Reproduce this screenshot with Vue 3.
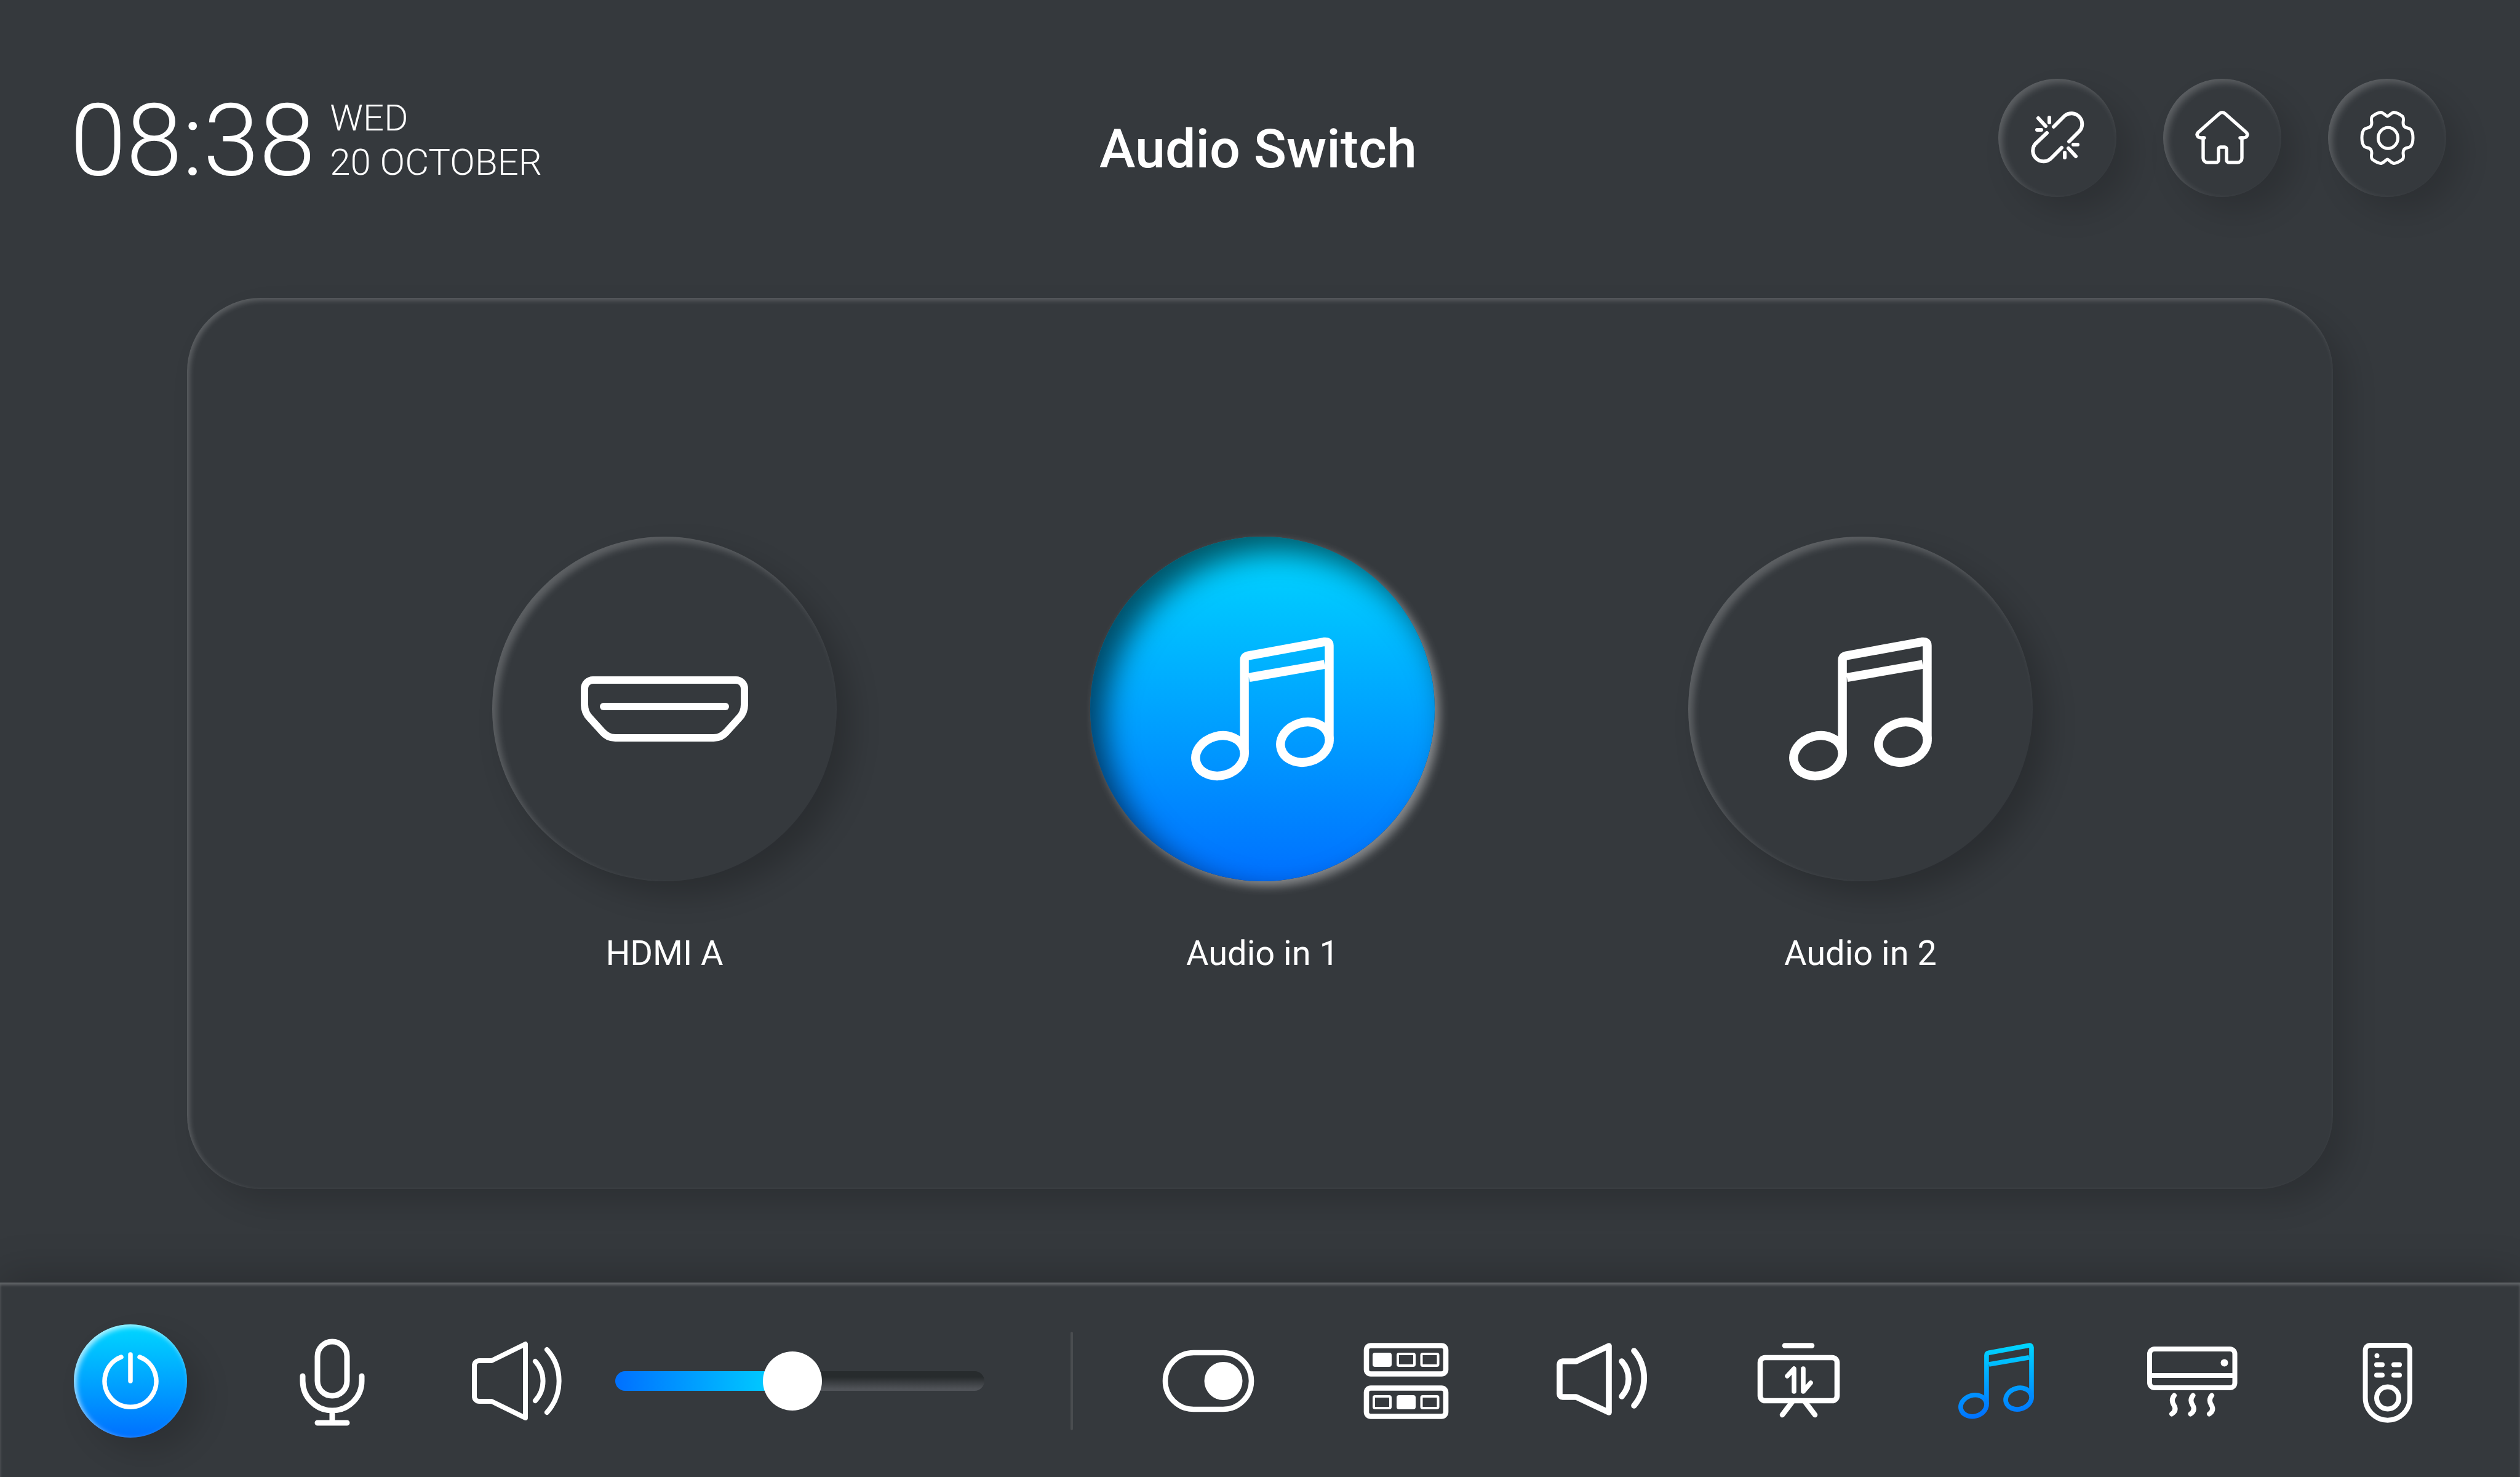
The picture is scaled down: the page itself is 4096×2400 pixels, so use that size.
<script setup>
import { ref } from 'vue'

const sources = [
  { id: 'hdmi-a', label: 'HDMI A', icon: 'hdmi' },
  { id: 'audio-1', label: 'Audio in 1', icon: 'note' },
  { id: 'audio-2', label: 'Audio in 2', icon: 'note' },
]
const selected = ref('audio-1')

const sections = [
  { id: 'toggle', label: 'Switches' },
  { id: 'matrix', label: 'Matrix' },
  { id: 'volume', label: 'Volume' },
  { id: 'screen', label: 'Screen' },
  { id: 'note', label: 'Audio' },
  { id: 'climate', label: 'Climate' },
  { id: 'remote', label: 'Remote' },
]
const section = ref('note')

const level = ref(47.6)
</script>

<template>
  <div class="page">
    <svg class="sprite" aria-hidden="true">
      <defs>
        <linearGradient id="accent" gradientUnits="userSpaceOnUse" x1="0" y1="0" x2="0" y2="234">
          <stop offset="0" stop-color="#00d8ff" />
          <stop offset="1" stop-color="#0070ff" />
        </linearGradient>
      </defs>
      <symbol id="unlink" viewBox="0 0 96 96" stroke-width="6">
        <path d="M42 30L60 12A17.4 17.4 0 0 1 84 37L67 54M31 40L12 58A17.4 17.4 0 0 0 37 82L55 64" />
        <path d="M17 16l12 13M35 15v8M15 35h7M66 65l12 13M60 72v8M74 59h7" />
      </symbol>
      <symbol id="home" viewBox="0 0 96 96" stroke-width="5.4">
        <path d="M19 48h-5c-6 0-9-5-5-9L43 9c3-3 7-3 10 0l34 30c4 4 1 9-5 9h-5" />
        <path d="M17 48v33a7 7 0 0 0 7 7h14a4 4 0 0 0 4-4V66a3 3 0 0 1 3-3h7a3 3 0 0 1 3 3v18a4 4 0 0 0 4 4h14a7 7 0 0 0 7-7V48" />
      </symbol>
      <symbol id="gear" viewBox="0 0 96 96" stroke-width="5">
        <path d="M48.500 13C45 12 42 7 38 6.500C33 7 28 10 24 13C20 17 25 23 22 28C20 33 14 31 11 34C7 38 7 44 7 48C7 52 7 58 11 62C14 65 20 63 22 68C25 73 20 79 24 83C28 86 33 89 38 89.500C42 89 45 84 48.500 83C52 84 55 89 59 89.500C64 89 69 86 73 83C77 79 72 73 75 68C77 63 83 65 86 62C90 58 90 52 90 48C90 44 90 38 86 34C83 31 77 33 75 28C72 23 77 17 73 13C69 10 64 7 59 6.500C55 7 52 12 48.500 13Z" />
        <ellipse cx="49.500" cy="48.300" rx="16" ry="17" />
      </symbol>
      <symbol id="hdmi" viewBox="-20 -84 312 274" stroke-width="12">
        <path d="M20 6h232a14 14 0 0 1 14 14v26c0 9-3 16-9 22l-20 22c-6 7-13 10-21 10H56c-8 0-15-3-21-10L15 68c-6-6-9-13-9-22V20a14 14 0 0 1 14-14z" />
        <path d="M37 49h198" />
      </symbol>
      <symbol id="note" viewBox="0 0 232 234" stroke-width="14.400">
        <path d="M86.600 188V38Q86.600 32 93 30.500L216 8Q224.500 7 224.500 14V166M94 66L217 44.700" stroke-linecap="butt" />
        <ellipse cx="47" cy="193" rx="40.200" ry="32.200" transform="rotate(-16 47 193)" />
        <ellipse cx="185" cy="171" rx="40.200" ry="32.200" transform="rotate(-16 185 171)" />
      </symbol>
      <symbol id="power" viewBox="0 0 96 96" stroke-width="7.500">
        <path d="M33 9A42 42 0 1 0 63 9M48 5v43" />
      </symbol>
      <symbol id="mic" viewBox="0 0 160 160" stroke-width="9">
        <rect x="56" y="16" width="48" height="88" rx="24" />
        <path d="M32 72v8a48 48 0 0 0 96 0v-8M80 128v20M56 148h48" />
      </symbol>
      <symbol id="speaker" viewBox="0 0 160 160" stroke-width="8">
        <path d="M94 20v120L39 113H19a8 8 0 0 1-8-8V55a8 8 0 0 1 8-8h20z" />
        <path d="M110 48a47 47 0 0 1 0 64M129 29a76 76 0 0 1 0 102" />
      </symbol>
      <symbol id="toggle" viewBox="0 0 160 160" stroke-width="8.600">
        <rect x="10" y="34" width="140" height="92" rx="46" />
        <circle cx="104.500" cy="80" r="31" fill="currentColor" stroke="none" />
      </symbol>
      <symbol id="matrix" viewBox="0 0 160 160" stroke-width="8.600">
        <rect x="17" y="22.500" width="129" height="46" rx="7" />
        <rect x="17" y="91.500" width="129" height="46" rx="7" />
        <g fill="currentColor" stroke="none">
          <rect x="27" y="34" width="31" height="23" rx="4" />
          <rect x="66" y="103" width="31" height="23" rx="4" />
        </g>
        <g stroke-width="4">
          <rect x="68" y="36" width="27" height="19" rx="2" />
          <rect x="106.500" y="36" width="27" height="19" rx="2" />
          <rect x="29" y="105" width="27" height="19" rx="2" />
          <rect x="106.500" y="105" width="27" height="19" rx="2" />
        </g>
      </symbol>
      <symbol id="volume" viewBox="0 0 160 160" stroke-width="9.600">
        <path d="M91 23v108L38 106H16a5 5 0 0 1-5-5V53a5 5 0 0 1 5-5h22z" />
        <path d="M112 48a42.400 42.400 0 0 1 0 57M132 31a69 69 0 0 1 0 89" />
      </symbol>
      <symbol id="screen" viewBox="0 0 160 160" stroke-width="8.600">
        <rect x="17" y="42" width="125" height="70" rx="8" />
        <path d="M57 22.500h44M69 114L53 135M90 114l16 21" />
        <path d="M61 72l11-12v37M87 60v37l12-14" stroke-width="7.600" />
      </symbol>
      <symbol id="climate" viewBox="0 0 160 160" stroke-width="8">
        <rect x="10" y="28" width="138.500" height="63" rx="8" />
        <path d="M10 71h138" />
        <circle cx="131.500" cy="50.500" r="6" fill="currentColor" stroke="none" />
        <path d="M50 103.500c-4 5-4 10-1 15c4 6 3 11-3 15M80.500 103.500c-4 5-4 10-1 15c4 6 3 11-3 15M111 103.500c-4 5-4 10-1 15c4 6 3 11-3 15" />
      </symbol>
      <symbol id="remote" viewBox="0 0 160 160" stroke-width="8">
        <path d="M49 22h56a8 8 0 0 1 8 8v77.500a36.200 36.200 0 0 1-72.400 0V30a8 8 0 0 1 8.400-8z" />
        <circle cx="77" cy="107.500" r="18" />
        <circle cx="59.500" cy="39" r="4" fill="currentColor" stroke="none" />
        <path d="M59 53.500h9M87 53.500h9M59 70.500h9M87 70.500h9" />
      </symbol>
    </svg>

    <header class="top">
      <div class="clock">
        <time class="time">08:38</time>
        <p class="date">WED<br />20 OCTOBER</p>
      </div>
      <h1 class="title">Audio Switch</h1>
      <nav class="actions" aria-label="Quick actions">
        <button v-for="name in ['unlink', 'home', 'gear']" :key="name" type="button" class="round" :aria-label="name">
          <svg class="icon small"><use :href="'#' + name" /></svg>
        </button>
      </nav>
    </header>

    <main class="panel">
      <button
        v-for="source in sources"
        :key="source.id"
        type="button"
        class="source"
        :class="{ active: selected === source.id }"
        :aria-pressed="selected === source.id"
        @click="selected = source.id"
      >
        <span class="disc">
          <svg class="icon" :class="source.icon"><use :href="'#' + source.icon" /></svg>
        </span>
        <span class="label">{{ source.label }}</span>
      </button>
    </main>

    <footer class="bar">
      <button type="button" class="power" aria-label="Power">
        <svg class="icon small"><use href="#power" /></svg>
      </button>
      <button type="button" class="plain mic" aria-label="Microphone">
        <svg class="icon medium"><use href="#mic" /></svg>
      </button>
      <button type="button" class="plain speaker" aria-label="Mute">
        <svg class="icon medium"><use href="#speaker" /></svg>
      </button>
      <input v-model="level" class="slider" type="range" min="0" max="100" step="0.1" aria-label="Volume level" />
      <span class="divider"></span>
      <nav class="sections" aria-label="Sections">
        <button
          v-for="item in sections"
          :key="item.id"
          type="button"
          class="plain"
          :class="{ current: section === item.id }"
          :aria-label="item.label"
          @click="section = item.id"
        >
          <svg class="icon" :class="item.id === 'note' ? 'tune' : 'medium'"><use :href="'#' + item.id" /></svg>
        </button>
      </nav>
    </footer>
  </div>
</template>

<style>
body {
  margin: 0;
  background: #35393d;
}
</style>

<style scoped>
.page {
  display: flex;
  flex-direction: column;
  min-height: 100vh;
  background: #35393d;
  color: #fff;
  font-family: Roboto, "Liberation Sans", sans-serif;
}

.sprite {
  position: absolute;
  width: 0;
  height: 0;
}

button {
  margin: 0;
  padding: 0;
  border: 0;
  background: none;
  color: inherit;
  font: inherit;
  cursor: pointer;
}

.icon {
  display: block;
  overflow: visible;
  fill: none;
  stroke: currentColor;
  stroke-linecap: round;
  stroke-linejoin: round;
}

.icon.small {
  width: 96px;
  height: 96px;
}

.icon.medium {
  width: 160px;
  height: 160px;
}

.icon.tune {
  width: 123px;
  height: 124px;
}

.icon.note {
  width: 232px;
  height: 234px;
}

.icon.hdmi {
  width: 312px;
  height: 274px;
}

.top {
  display: grid;
  grid-template-columns: 1fr auto 1fr;
  align-items: start;
  padding: 128px 120px 0 114px;
}

.clock {
  display: flex;
  align-items: last baseline;
  gap: 24px;
  padding-top: 28px;
}

.time {
  font-size: 164px;
  font-weight: 300;
  line-height: 144px;
}

.date {
  margin: 0;
  font-size: 60px;
  font-weight: 300;
  line-height: 72px;
}

.title {
  margin: 0;
  padding-top: 62px;
  font-size: 88px;
  font-weight: 500;
  line-height: 104px;
}

.actions {
  display: flex;
  justify-content: flex-end;
  gap: 76px;
}

.round {
  display: grid;
  place-items: center;
  width: 192px;
  height: 192px;
  border-radius: 50%;
  box-shadow:
    inset 6px 6px 12px rgba(255, 255, 255, 0.2),
    24px 24px 48px rgba(0, 0, 0, 0.15);
}

.panel {
  flex: 1;
  display: flex;
  justify-content: center;
  align-items: flex-start;
  gap: 412px;
  box-sizing: border-box;
  margin: 164px 304px 152px;
  padding: 388px 0 160px 8px;
  border-radius: 120px;
  box-shadow:
    inset 4px 4px 8px rgba(255, 255, 255, 0.2),
    24px 24px 48px rgba(0, 0, 0, 0.15);
}

.source {
  display: flex;
  flex-direction: column;
  align-items: center;
  gap: 84px;
  width: 560px;
}

.disc {
  display: grid;
  place-items: center;
  width: 560px;
  height: 560px;
  border-radius: 50%;
  box-shadow:
    inset 8px 8px 12px rgba(255, 255, 255, 0.2),
    24px 24px 48px rgba(0, 0, 0, 0.2);
}

.active .disc {
  background: linear-gradient(180deg, #00d8ff, #0070ff);
  box-shadow:
    inset 24px 24px 48px rgba(0, 0, 0, 0.6),
    8px 8px 16px rgba(255, 255, 255, 0.4);
}

.label {
  font-size: 56px;
  line-height: 66px;
}

.bar {
  display: flex;
  align-items: center;
  padding: 68px 132px 64px 120px;
  box-shadow:
    inset 0 4px 4px rgba(255, 255, 255, 0.22),
    0 -12px 64px rgba(0, 0, 0, 0.2);
}

.power {
  display: grid;
  place-items: center;
  flex: none;
  width: 184px;
  height: 184px;
  border-radius: 50%;
  background: linear-gradient(180deg, #00d8ff, #0070ff);
  box-shadow:
    inset 4px 4px 8px rgba(255, 255, 255, 0.7),
    24px 24px 48px rgba(0, 0, 0, 0.15);
}

.plain {
  display: grid;
  place-items: center;
  flex: none;
  width: 160px;
  height: 160px;
}

.current .icon {
  stroke: url(#accent);
}

.mic {
  margin-left: 156px;
}

.speaker {
  margin-left: 140px;
}

.slider {
  appearance: none;
  flex: none;
  width: 600px;
  height: 96px;
  margin: 0 0 0 80px;
  background: none;
  cursor: pointer;
}

.slider::-webkit-slider-runnable-track {
  height: 32px;
  border-radius: 16px;
  background:
    linear-gradient(90deg, #0070ff, #00d8ff) left / 288px 100% no-repeat,
    linear-gradient(180deg, #272b2d 30%, #505358 90%);
}

.slider::-webkit-slider-thumb {
  appearance: none;
  width: 96px;
  height: 96px;
  margin-top: -32px;
  border: 0;
  border-radius: 50%;
  background: #fff;
}

.divider {
  flex: none;
  width: 4px;
  height: 160px;
  margin: 0 140px;
  border-radius: 2px;
  background: #4a4d50;
}

.sections {
  flex: 1;
  display: flex;
  justify-content: space-between;
}
</style>
